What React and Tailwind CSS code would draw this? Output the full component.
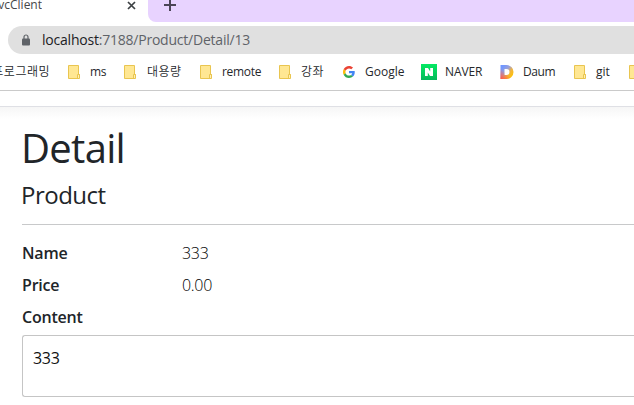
import React from "react";

function Folder() {
  return (
    <svg className="block shrink-0" width="13" height="14" viewBox="0 0 13 14">
      <path d="M.5.5h10v9h1v4H.5z" fill="#ffe793" stroke="#e9c550" />
      <path d="M9.5 13V9.5h2V13" fill="#fff0b8" stroke="#e9c550" />
    </svg>
  );
}

function Google() {
  return (
    <svg className="block shrink-0" width="12" height="12" viewBox="0 0 48 48">
      <path fill="#EA4335" d="M24 9.5c3.54 0 6.71 1.22 9.21 3.6l6.85-6.85C35.9 2.38 30.47 0 24 0 14.62 0 6.51 5.38 2.56 13.22l7.98 6.19C12.43 13.72 17.74 9.5 24 9.5z" />
      <path fill="#4285F4" d="M46.98 24.55c0-1.57-.15-3.09-.38-4.55H24v9.02h12.94c-.58 2.96-2.26 5.48-4.78 7.18l7.73 6c4.51-4.18 7.09-10.36 7.09-17.65z" />
      <path fill="#FBBC05" d="M10.53 28.59c-.48-1.45-.76-2.99-.76-4.59s.27-3.14.76-4.59l-7.98-6.19C.92 16.46 0 20.12 0 24c0 3.88.92 7.54 2.56 10.78l7.97-6.19z" />
      <path fill="#34A853" d="M24 48c6.48 0 11.93-2.13 15.89-5.81l-7.73-6c-2.15 1.45-4.92 2.3-8.16 2.3-6.26 0-11.57-4.22-13.47-9.91l-7.98 6.19C6.51 42.62 14.62 48 24 48z" />
    </svg>
  );
}

function Naver() {
  return (
    <svg className="block shrink-0" width="16" height="16" viewBox="0 0 16 16">
      <defs>
        <linearGradient id="nv" x2="0" y2="1">
          <stop stopColor="#03ea63" />
          <stop offset="1" stopColor="#05b85b" />
        </linearGradient>
      </defs>
      <path d="M0 0h16v16H0z" fill="url(#nv)" />
      <path d="M4 4h3l2.2 3.5V4H12v8H9L6.8 8.5V12H4z" fill="#fff" />
    </svg>
  );
}

function Daum() {
  return (
    <svg className="block shrink-0" width="14" height="14" viewBox="0 0 14 14">
      <defs>
        <linearGradient id="dm" x1=".1" y1=".2" x2=".85" y2=".9">
          <stop stopColor="#7197ff" />
          <stop offset=".35" stopColor="#9aa0d8" />
          <stop offset=".65" stopColor="#f2b43c" />
          <stop offset="1" stopColor="#ffc400" />
        </linearGradient>
        <linearGradient id="dr" x1=".6" y1=".4" x2=".1" y2="1">
          <stop offset=".3" stopColor="#ff5a4a" stopOpacity="0" />
          <stop offset="1" stopColor="#ff5a4a" />
        </linearGradient>
      </defs>
      <path d="M.5 0H6.5a7 7 0 0 1 0 14H.5zM4.5 4v6h2a3 3 0 0 0 0-6z" fill="url(#dm)" fillRule="evenodd" />
      <path d="M.5 0H6.5a7 7 0 0 1 0 14H.5zM4.5 4v6h2a3 3 0 0 0 0-6z" fill="url(#dr)" fillRule="evenodd" />
    </svg>
  );
}

function Bookmark({ icon, label, className, gap = "w-[23px]", tracking = "" }) {
  return (
    <div className={`flex h-full shrink-0 items-center ${className}`}>
      <span className={`flex shrink-0 ${gap}`}>{icon}</span>
      <span className={`whitespace-nowrap ${tracking}`}>{label}</span>
    </div>
  );
}

export default function App() {
  return (
    <div className="flex h-[405px] w-[634px] flex-col overflow-hidden bg-white font-['Open_Sans','Noto_Sans_CJK_KR',sans-serif] text-[#212529]">
      <header className="shrink-0">
        <div className="flex h-[22px]">
          <div className="flex w-[148px] shrink-0 justify-between">
            <div className="flex w-[42px] justify-end overflow-hidden text-[12px] leading-[10px] text-[#45474a]">
              <span className="whitespace-nowrap">vcClient</span>
            </div>
            <svg className="mr-3 mt-px block" width="9" height="9" viewBox="0 0 9 9">
              <path d="M1 1l7 7M8 1L1 8" stroke="#3c4043" strokeWidth="1.7" />
            </svg>
          </div>
          <div className="flex-1 rounded-bl-[8px] bg-[#e8d3ff] pl-4">
            <svg className="block" width="12" height="12" viewBox="0 0 12 12">
              <path d="M6 0v11M0 5h12" stroke="#4b4456" strokeWidth="2" />
            </svg>
          </div>
        </div>
        <div className="pl-2 pt-1">
          <div className="flex h-7 items-center rounded-l-full bg-[#e0e0e0] pl-[14px]">
            <svg className="mb-px block" width="8" height="12" viewBox="0 0 8 12">
              <path d="M2 5V3a2 2 0 0 1 4 0v2" fill="none" stroke="#5f6368" strokeWidth="1.2" />
              <rect y="4.5" width="8" height="7" rx="1" fill="#5f6368" />
            </svg>
            <span className="ml-3 whitespace-nowrap text-[14px] leading-7 tracking-[-0.22px] text-[#5f6368]">
              <span className="text-[#202124]">localhost</span>:7188/Product/Detail/13
            </span>
          </div>
        </div>
        <nav className="flex h-[37px] border-b border-[#cacaca] text-[12px] leading-4 text-[#26282b]">
          <div className="flex w-[68px] shrink-0 items-center overflow-hidden">
            <div className="flex w-[50px] justify-end">
              <span className="whitespace-nowrap font-[350] tracking-[0.5px]">프로그래밍</span>
            </div>
          </div>
          <Bookmark className="w-[56px]" icon={<Folder />} label="ms" gap="w-[22px]" tracking="tracking-[-0.4px]" />
          <Bookmark className="w-[76px]" icon={<Folder />} label="대용량" tracking="font-[350] tracking-[0.4px]" />
          <Bookmark className="w-[79px]" icon={<Folder />} label="remote" gap="w-[22px]" tracking="tracking-[-0.3px]" />
          <Bookmark className="w-[64px]" icon={<Folder />} label="강좌" gap="w-[22px]" tracking="font-[350] tracking-[0.5px]" />
          <Bookmark className="w-[78px]" icon={<Google />} label="Google" gap="w-[22px]" />
          <Bookmark className="w-[79px]" icon={<Naver />} label="NAVER" gap="w-[24px]" tracking="tracking-[-0.1px]" />
          <Bookmark className="w-[74px]" icon={<Daum />} label="Daum" tracking="tracking-[-0.4px]" />
          <Bookmark className="w-[55px]" icon={<Folder />} label="git" gap="w-[22px]" />
          <Bookmark className="w-[13px]" icon={<Folder />} label="" />
        </nav>
      </header>
      <div className="h-[16px] shrink-0 border-b border-[#dfe0e5]" />
      <div className="h-3 shrink-0 bg-gradient-to-b from-[#f6f6f6] to-white" />
      <main className="pl-[22px]">
        <h1 className="-ml-px mt-[5px] h-12 whitespace-nowrap text-[40px] leading-[48px] tracking-[-0.7px]">Detail</h1>
        <h4 className="-ml-px mt-2 h-[29px] text-[24px] leading-[29px] tracking-[-0.5px]">Product</h4>
        <hr className="mt-[15px] border-[#c8c9ca]" />
        <dl className="mt-4 grid grid-cols-[160px_1fr] text-[16px] leading-6">
          <dt className="mb-2 font-semibold tracking-[-0.2px]">Name</dt>
          <dd className="font-light tracking-[-0.3px] text-black">333</dd>
          <dt className="mb-2 font-semibold tracking-[-0.2px]">Price</dt>
          <dd className="font-light tracking-[-0.3px] text-black">0.00</dd>
          <dt className="font-semibold tracking-[-0.2px]">Content</dt>
        </dl>
        <div className="mt-[6px] h-[62px] rounded-l-[3px] border border-r-0 border-[#c5c5c5] px-[10px] py-[10px] text-[16px] leading-6 tracking-[-0.3px] text-[#111]">
          333
        </div>
      </main>
    </div>
  );
}
